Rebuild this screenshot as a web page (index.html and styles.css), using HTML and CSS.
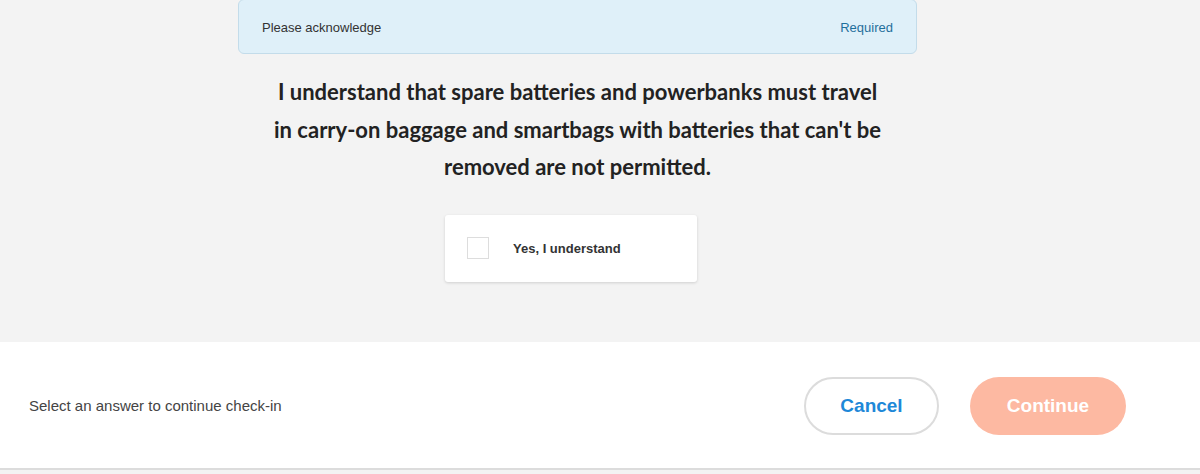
FILE: index.html
```html
<!DOCTYPE html>
<html>
<head>
<meta charset="utf-8">
<link rel="stylesheet" href="styles.css">
</head>
<body>
<main class="main">
  <div class="content">
    <div class="banner">
      <span class="banner-label">Please acknowledge</span>
      <span class="banner-req">Required</span>
    </div>
    <h1 class="heading">I understand that spare batteries and powerbanks must travel in carry-on baggage and smartbags with batteries that can't be removed are not permitted.</h1>
    <label class="option">
      <span class="box"></span>
      <span class="option-text">Yes, I understand</span>
    </label>
  </div>
</main>
<footer class="footer">
  <span class="hint">Select an answer to continue check-in</span>
  <div class="actions">
    <button class="btn btn-cancel">Cancel</button>
    <button class="btn btn-continue">Continue</button>
  </div>
</footer>
<div class="bottom"></div>
</body>
</html>
```

FILE: styles.css
```css
html, body {
  margin: 0;
  padding: 0;
  background: #f3f3f3;
  font-family: "Liberation Sans", Arial, sans-serif;
}
.main {
  box-sizing: border-box;
  height: 342px;
  display: flex;
  justify-content: center;
  padding-right: 45px;
}
.content {
  width: 679px;
  display: flex;
  flex-direction: column;
  align-items: center;
}
.banner {
  box-sizing: border-box;
  width: 100%;
  height: 55px;
  margin-top: -1px;
  background: #dff0f9;
  border: 1px solid #c3dcea;
  border-radius: 6px;
  display: flex;
  align-items: center;
  justify-content: space-between;
  padding: 2px 23px 0 23px;
  font-size: 13px;
}
.banner-label { color: #333; }
.banner-req { color: #1f6f9c; }
.heading {
  margin: 19px 0 0;
  width: 612px;
  text-align: center;
  font-family: Lato, sans-serif;
  font-weight: 700;
  font-size: 22px;
  line-height: 37.5px;
  color: #222;
}
.option {
  box-sizing: border-box;
  margin-top: 29px;
  margin-right: 13px;
  width: 252px;
  height: 67px;
  background: #fff;
  border-radius: 3px;
  box-shadow: 0 1px 3px rgba(0,0,0,0.15);
  display: flex;
  align-items: center;
  padding-left: 22px;
}
.box {
  box-sizing: border-box;
  width: 22px;
  height: 22px;
  border: 1px solid #ddd;
}
.option-text {
  margin-left: 24px;
  font-size: 13px;
  font-weight: 700;
  color: #333;
}
.footer {
  height: 126px;
  background: #fff;
  border-bottom: 2px solid #dcdcdc;
  display: flex;
  align-items: center;
  justify-content: space-between;
  padding: 0 74px 0 29px;
}
.hint {
  font-size: 15px;
  color: #444;
}
.actions {
  display: flex;
  gap: 31px;
  margin-top: 2px;
}
.btn {
  box-sizing: border-box;
  height: 58px;
  border-radius: 29px;
  font-family: "Liberation Sans", Arial, sans-serif;
  font-size: 19px;
  font-weight: 700;
}
.btn-cancel {
  width: 135px;
  background: #fff;
  border: 2px solid #dcdcdc;
  color: #1e88d8;
}
.btn-continue {
  width: 156px;
  background: #fdb9a2;
  border: none;
  color: #fff;
}
.bottom {
  height: 4px;
  background: #f3f3f3;
}
```
